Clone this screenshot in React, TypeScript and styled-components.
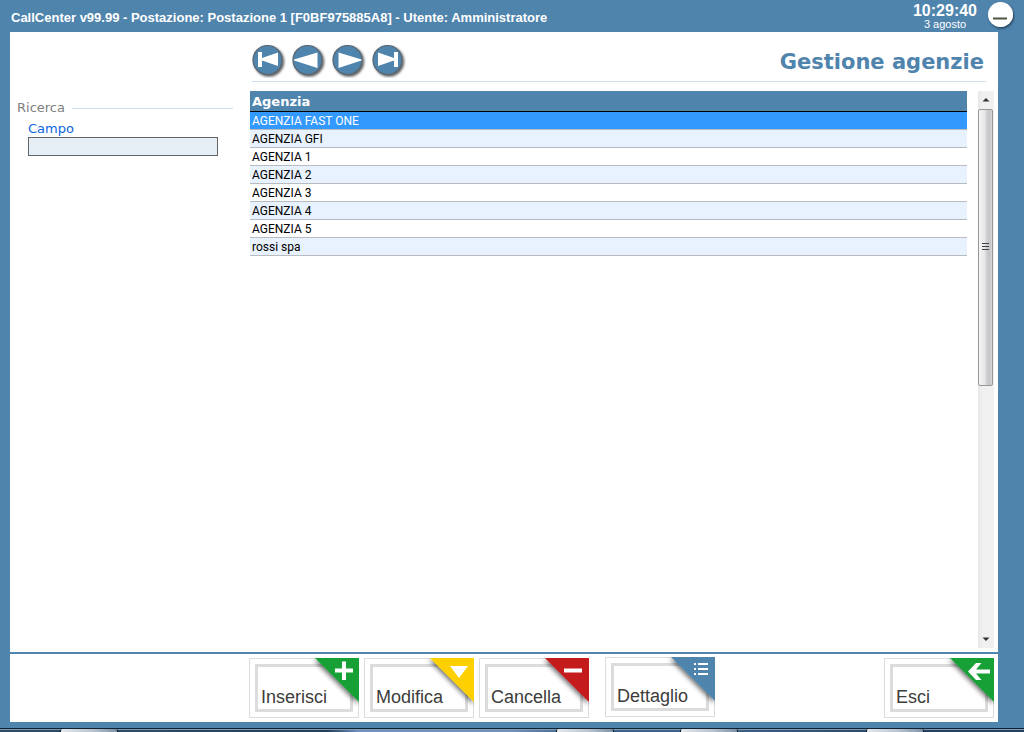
import React from "react";
import styled, { createGlobalStyle } from "styled-components";

const blue = "#4f84ad";
const ui = '"Liberation Sans", Arial, sans-serif';
const wide = '"DejaVu Sans", Verdana, sans-serif';

const Global = createGlobalStyle`
  * { box-sizing: border-box; }
  html, body, #root { height: 100%; }
  body { margin: 0; background: ${blue}; font-family: ${ui}; }
`;

const Window = styled.div`
  min-height: 100%;
  display: flex;
  flex-direction: column;
  background: ${blue};
`;

const TitleBar = styled.header`
  display: flex;
  height: 32px;
  padding: 0 9px 0 11px;
  color: #fff;
`;

const AppTitle = styled.h1`
  flex: 1;
  margin: 0;
  font-size: 13px;
  line-height: 36px;
  font-weight: bold;
  white-space: nowrap;
`;

const Clock = styled.div`
  display: flex;
  flex-direction: column;
  align-items: center;
  padding-top: 2px;
  margin-right: 10px;
`;

const Time = styled.time`
  font-size: 16px;
  line-height: 18px;
  font-weight: bold;
`;

const Day = styled.span`
  font-size: 11px;
  line-height: 8px;
`;

const IconButton = styled.button`
  display: block;
  padding: 0;
  border: 0;
  background: none;
  cursor: pointer;

  svg { display: block; }
`;

const Panel = styled.main`
  flex: 1;
  display: flex;
  flex-direction: column;
  margin: 0 26px 6px 10px;
  background: #fff;
`;

const Content = styled.div`
  flex: 1;
  display: flex;
`;

const Sidebar = styled.aside`
  width: 240px;
  padding: 68px 17px 0 7px;
  font-family: ${wide};
  font-size: 13px;
  line-height: 16px;
`;

const GroupTitle = styled.h2`
  display: flex;
  align-items: center;
  gap: 7px;
  margin: 0 0 5px;
  font-size: 13px;
  line-height: 16px;
  font-weight: normal;
  color: #808080;

  &::after {
    content: "";
    flex: 1;
    height: 1px;
    background: #cfe0f5;
  }
`;

const Field = styled.label`
  display: block;
  padding: 0 15px 0 11px;
  color: #0b66dd;
`;

const TextBox = styled.input`
  display: block;
  width: 100%;
  height: 19px;
  padding: 0 3px;
  border: 1px solid #646464;
  background: #e6eef6;
  font: 13px ${wide};
`;

const Records = styled.section`
  flex: 1;
  display: flex;
  flex-direction: column;
  padding-right: 4px;
`;

const Heading = styled.div`
  display: flex;
  align-items: center;
  justify-content: space-between;
  height: 50px;
  margin: 0 8px 9px 2px;
  padding: 9px 2px 0 0;
  border-bottom: 1px solid #cfe0f5;
`;

const Navigator = styled.nav`
  display: flex;
  gap: 6px;
`;

const PageTitle = styled.h2`
  margin: 0;
  padding-top: 2px;
  font-family: ${wide};
  font-size: 21px;
  line-height: 28px;
  font-weight: bold;
  color: ${blue};
`;

const ListArea = styled.div`
  flex: 1;
  display: flex;
  gap: 11px;
  align-items: stretch;
  padding-bottom: 4px;
`;

const TableHolder = styled.div`
  flex: 1;
`;

const Table = styled.table`
  width: 100%;
  border-collapse: separate;
  border-spacing: 0;
  text-align: left;
`;

const HeadCell = styled.th`
  height: 21px;
  padding: 2px 2px 0;
  border-bottom: 1px solid #000;
  background: ${blue};
  color: #fff;
  font-family: ${wide};
  font-size: 13px;
  line-height: 18px;
`;

const Cell = styled.td`
  height: 18px;
  padding: 2px 2px 0;
  border-bottom: 1px solid #b8bcc0;
  font-family: Roboto, sans-serif;
  font-size: 12px;
  line-height: 15px;
`;

const Row = styled.tr<{ $selected: boolean }>`
  color: ${(p) => (p.$selected ? "#fff" : "#000")};
  background: ${(p) => (p.$selected ? "#3399ff" : "#fff")};

  &:nth-child(even) { background: #e8f2fe; }
`;

const ScrollBar = styled.div`
  width: 16px;
  display: flex;
  flex-direction: column;
  align-items: center;
  background: linear-gradient(90deg, #e8e8e8, #f0f0f0 30%, #f0f0f0);
`;

const ScrollArrow = styled(IconButton)`
  width: 16px;
  height: 17px;

  svg { margin: 0 auto; }
`;

const Track = styled.div`
  flex: 1;
  width: 16px;
  padding-top: 1px;
`;

const Thumb = styled.div`
  display: flex;
  align-items: center;
  justify-content: center;
  width: 15px;
  height: 53%;
  border: 1px solid #969696;
  border-radius: 2px;
  background: linear-gradient(90deg, #f5f5f5, #e6e6e8 45%, #cdcdd2 60%, #c3c3c8 85%, #dcdcdc);
`;

const Footer = styled.footer`
  display: flex;
  gap: 5px;
  height: 70px;
  padding: 4px 4px 0 239px;
  border-top: 2px solid ${blue};
`;

const Action = styled.button`
  position: relative;
  width: 110px;
  height: 60px;
  padding: 5px;
  border: 1px solid #dcdcdc;
  background: #fff;
  cursor: pointer;
`;

const ActionLabel = styled.span`
  display: block;
  height: 48px;
  padding: 20px 0 0 3px;
  border: 3px solid #dcdcdc;
  text-align: left;
  font-family: ${ui};
  font-size: 18px;
  line-height: 20px;
  color: #3c3c3b;
`;

const Corner = styled.svg`
  position: absolute;
  top: -1px;
  right: -1px;
  overflow: hidden;
`;

const ActionGroup = styled.div<{ $push?: boolean }>`
  display: flex;
  gap: 5px;
  margin-left: ${(p) => (p.$push ? "auto" : "0")};
`;

const Detail = styled(ActionGroup)`
  margin: -1px 0 0 11px;
`;

const TaskBar = styled.div`
  display: grid;
  grid-template-columns: 60fr 58fr 438fr 58fr 66fr 58fr 128fr 58fr 100fr;
  height: 4px;
  border-top: 1px solid #10202f;
  background: linear-gradient(90deg, #2b4a63, #2b4a63 14%, #22405a 32%, #6f93bd 35%, #6f93b4 50%, #3d6488 56%, #3d6488 70%, #23415e 90%, #23415e);
  box-shadow: inset 0 1px #7f9db8;
`;

const TaskTab = styled.span<{ $column: number }>`
  grid-column: ${(p) => p.$column};
  border: 1px solid #10202f;
  border-width: 0 1px;
  border-radius: 2px 2px 0 0;
  background: linear-gradient(90deg, #e4e8ec, #b9c4cf 55%, #7e93a8);
`;

function RoundButton({ label, children }: { label: string; children: React.ReactNode }) {
  return (
    <IconButton type="button" aria-label={label}>
      <svg width="34" height="34" viewBox="0 0 34 34">
        <defs>
          <filter id="discShadow" x="-20%" y="-20%" width="150%" height="150%">
            <feDropShadow dx="1.5" dy="1.5" stdDeviation="1" floodColor="#222" floodOpacity="0.75" />
          </filter>
        </defs>
        <circle cx="15.5" cy="16" r="14.5" fill={blue} stroke="#5c6770" strokeWidth="1.2" filter="url(#discShadow)" />
        {children}
      </svg>
    </IconButton>
  );
}

function ActionButton({ label, color, children }: { label: string; color: string; children: React.ReactNode }) {
  return (
    <Action type="button">
      <ActionLabel>{label}</ActionLabel>
      <Corner width="52" height="50" viewBox="0 0 52 50" aria-hidden="true">
        <defs>
          <filter id="foldShadow" x="-20%" y="-20%" width="140%" height="140%">
            <feDropShadow dx="-1" dy="2" stdDeviation="2.5" floodColor="#000" floodOpacity="0.6" />
          </filter>
        </defs>
        <path d="M8 0H52V44Z" fill={color} filter="url(#foldShadow)" />
        {children}
      </Corner>
    </Action>
  );
}

const agencies = [
  "AGENZIA FAST ONE",
  "AGENZIA GFI",
  "AGENZIA 1",
  "AGENZIA 2",
  "AGENZIA 3",
  "AGENZIA 4",
  "AGENZIA 5",
  "rossi spa",
];

export default function App() {
  return (
    <>
      <Global />
      <Window>
        <TitleBar>
          <AppTitle>CallCenter v99.99 - Postazione: Postazione 1 [F0BF975885A8] - Utente: Amministratore</AppTitle>
          <Clock>
            <Time>10:29:40</Time>
            <Day>3 agosto</Day>
          </Clock>
          <IconButton type="button" aria-label="Riduci a icona">
            <svg width="28" height="32" viewBox="0 0 28 32">
              <defs>
                <filter id="minShadow" x="-20%" y="-20%" width="150%" height="150%">
                  <feDropShadow dx="1" dy="1.5" stdDeviation="1" floodColor="#123" floodOpacity="0.7" />
                </filter>
              </defs>
              <circle cx="13.5" cy="14.5" r="12.5" fill="#fff" filter="url(#minShadow)" />
              <path d="M6 18.5H20" stroke="#4a5540" strokeWidth="2" />
            </svg>
          </IconButton>
        </TitleBar>
        <Panel>
          <Content>
            <Sidebar>
              <GroupTitle>Ricerca</GroupTitle>
              <Field>
                Campo
                <TextBox type="text" />
              </Field>
            </Sidebar>
            <Records>
              <Heading>
                <Navigator aria-label="Record">
                  <RoundButton label="Primo">
                    <path d="M6 8H10V14L26 8.5V22L10 16.5V23H6Z" fill="#fff" />
                  </RoundButton>
                  <RoundButton label="Precedente">
                    <path d="M2 15.5V16.5L25.5 24V8.5Z" fill="#fff" />
                  </RoundButton>
                  <RoundButton label="Successivo">
                    <path d="M29.5 15.5V16.5L6.5 24V8.5Z" fill="#fff" />
                  </RoundButton>
                  <RoundButton label="Ultimo">
                    <path d="M26 8H22V14L6 8.5V22L22 16.5V23H26Z" fill="#fff" />
                  </RoundButton>
                </Navigator>
                <PageTitle>Gestione agenzie</PageTitle>
              </Heading>
              <ListArea>
                <TableHolder>
                  <Table>
                    <thead>
                      <tr>
                        <HeadCell scope="col">Agenzia</HeadCell>
                      </tr>
                    </thead>
                    <tbody>
                      {agencies.map((name, i) => (
                        <Row key={name} $selected={i === 0}>
                          <Cell>{name}</Cell>
                        </Row>
                      ))}
                    </tbody>
                  </Table>
                </TableHolder>
                <ScrollBar>
                  <ScrollArrow type="button" aria-label="Scorri su">
                    <svg width="8" height="5" viewBox="0 0 8 5"><path d="M0.5 4.5L4 1L7.5 4.5Z" fill="#333" /></svg>
                  </ScrollArrow>
                  <Track>
                    <Thumb>
                      <svg width="8" height="8" viewBox="0 0 8 8">
                        <path d="M0 0.5H7M0 3.5H7M0 6.5H7" stroke="#444" />
                      </svg>
                    </Thumb>
                  </Track>
                  <ScrollArrow type="button" aria-label="Scorri giù">
                    <svg width="8" height="5" viewBox="0 0 8 5"><path d="M0.5 0.5L4 4L7.5 0.5Z" fill="#333" /></svg>
                  </ScrollArrow>
                </ScrollBar>
              </ListArea>
            </Records>
          </Content>
          <Footer>
            <ActionGroup>
              <ActionButton label="Inserisci" color="#17a035">
                <path d="M28 12.5H46M37 3.5V22" stroke="#fff" strokeWidth="4" />
              </ActionButton>
              <ActionButton label="Modifica" color="#ffd000">
                <path d="M28 8H46L37 20Z" fill="#fff" />
              </ActionButton>
              <ActionButton label="Cancella" color="#c41c1c">
                <path d="M27 12.5H45" stroke="#fff" strokeWidth="4" />
              </ActionButton>
            </ActionGroup>
            <Detail>
              <ActionButton label="Dettaglio" color={blue}>
                <path d="M31 7H33M31 12H33M31 17H33M35 7H45M35 12H45M35 17H45" stroke="#fff" strokeWidth="2" />
              </ActionButton>
            </Detail>
            <ActionGroup $push>
              <ActionButton label="Esci" color="#17a035">
                <path d="M26 13.5L34 5H39.5L34 11.5H48V15.5H34L39.5 22H34Z" fill="#fff" />
              </ActionButton>
            </ActionGroup>
          </Footer>
        </Panel>
        <TaskBar>
          <TaskTab $column={2} />
          <TaskTab $column={4} />
          <TaskTab $column={6} />
          <TaskTab $column={8} />
        </TaskBar>
      </Window>
    </>
  );
}
